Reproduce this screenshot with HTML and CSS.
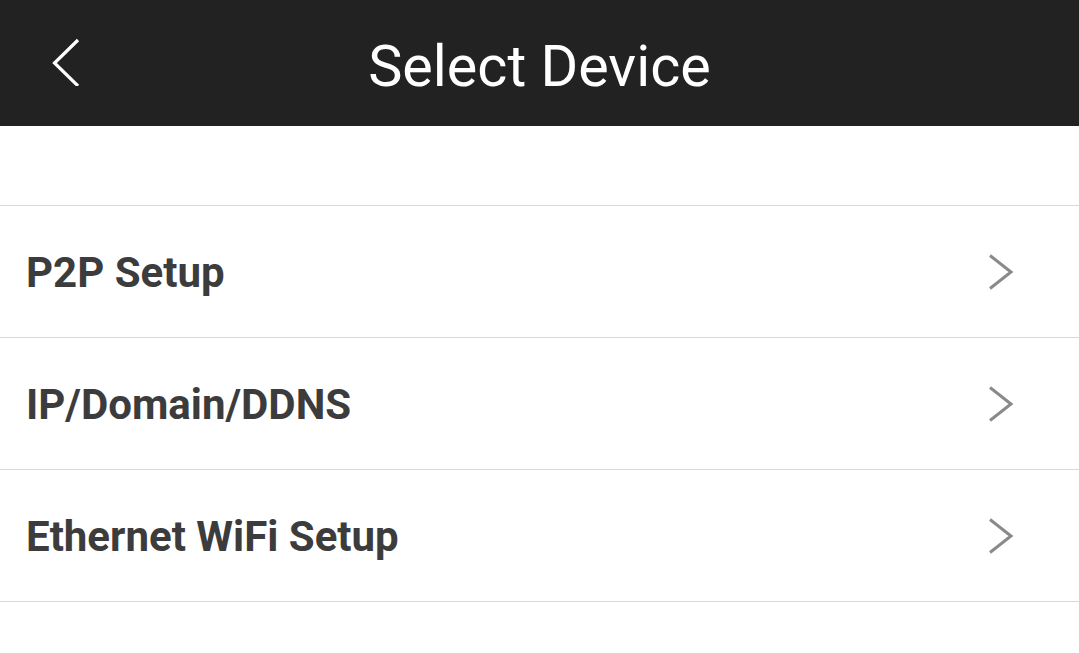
FILE: index.html
```html
<!DOCTYPE html>
<html lang="en">
<head>
    <meta charset="UTF-8">
    <meta name="viewport" content="width=device-width, initial-scale=1.0">
    <title>Select Device</title>
    <link rel="stylesheet" href="styles.css">
</head>
<body>

    <div class="header">
        <a class="back" href="#">
            <svg width="40" height="60" viewBox="0 0 40 60">
                <polyline points="32,14 8.5,37 32,60" fill="none" stroke="#fff" stroke-width="3.2"/>
            </svg>
        </a>
        <div class="title">Select Device</div>
    </div>

    <div class="list">
        <div class="item">
            <span class="label">P2P Setup</span>
            <svg class="arrow" width="30" height="40" viewBox="0 0 30 40"><polyline points="2,3.5 23,20 2,36.5" fill="none" stroke="#8a8a8a" stroke-width="3"/></svg>
        </div>
        <div class="item">
            <span class="label">IP/Domain/DDNS</span>
            <svg class="arrow" width="30" height="40" viewBox="0 0 30 40"><polyline points="2,3.5 23,20 2,36.5" fill="none" stroke="#8a8a8a" stroke-width="3"/></svg>
        </div>
        <div class="item">
            <span class="label">Ethernet WiFi Setup</span>
            <svg class="arrow" width="30" height="40" viewBox="0 0 30 40"><polyline points="2,3.5 23,20 2,36.5" fill="none" stroke="#8a8a8a" stroke-width="3"/></svg>
        </div>
    </div>

</body>
</html>
```

FILE: styles.css
```css
* {
    box-sizing: border-box;
    margin: 0;
    padding: 0;
}

body {
    background-color: #ffffff;
    font-family: Roboto, "Liberation Sans", sans-serif;
    width: 1079px;
    height: 653px;
    overflow: hidden;
}

.header {
    position: relative;
    height: 126px;
    background-color: #222222;
    display: flex;
    justify-content: center;
    align-items: center;
}

.back {
    position: absolute;
    left: 46px;
    top: 26px;
    display: block;
}

.back svg {
    display: block;
}

.title {
    color: #ffffff;
    font-size: 57.5px;
    font-weight: 400;
    padding-top: 6px;
}

.list {
    margin-top: 79px;
    border-top: 1px solid #d8d8d8;
}

.item {
    height: 132px;
    display: flex;
    align-items: center;
    justify-content: space-between;
    padding: 0 61px 0 26px;
    border-bottom: 1px solid #d8d8d8;
}

.label {
    font-size: 42px;
    font-weight: 700;
    color: #3c3c3c;
    padding-top: 2px;
}

.arrow {
    display: block;
}
```
